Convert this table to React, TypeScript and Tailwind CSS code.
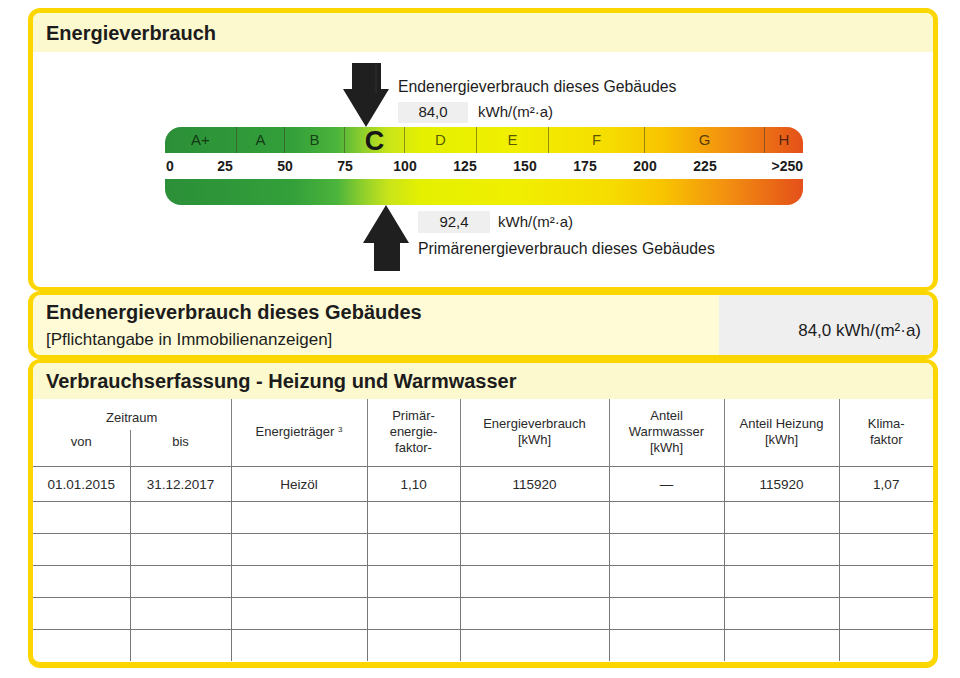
import React from 'react'

const bar =
  'bg-[linear-gradient(90deg,#2b8f38_0%,#33a03a_20%,#4cb43c_27%,#8fcf2c_31%,#c8e41a_35%,#e4f000_40%,#f1ef00_55%,#f6dc00_70%,#f8c400_78%,#f29010_88%,#e4501a_100%)]'

const classes = [
  { label: 'A+', w: 'w-[72px]' },
  { label: 'A', w: 'w-[48px]' },
  { label: 'B', w: 'w-[60px]' },
  { label: 'C', w: 'w-[60px]', big: true },
  { label: 'D', w: 'w-[72px]' },
  { label: 'E', w: 'w-[72px]' },
  { label: 'F', w: 'w-[96px]' },
  { label: 'G', w: 'w-[120px]' },
  { label: 'H', w: 'flex-1' },
]

const ticks = ['25', '50', '75', '100', '125', '150', '175', '200', '225']

const rows = [
  ['01.01.2015', '31.12.2017', 'Heizöl', '1,10', '115920', '—', '115920', '1,07'],
  ['', '', '', '', '', '', '', ''],
  ['', '', '', '', '', '', '', ''],
  ['', '', '', '', '', '', '', ''],
  ['', '', '', '', '', '', '', ''],
  ['', '', '', '', '', '', '', ''],
]

function ArrowDown() {
  return (
    <svg width="46" height="64" viewBox="0 0 46 64" className="self-end shrink-0">
      <path d="M9 0H38V26H46L23 64L0 26H9Z" fill="#1f1f1f" />
      <path d="M33 1V30" stroke="#333" strokeWidth="1" />
    </svg>
  )
}

function ArrowUp() {
  return (
    <svg width="46" height="66" viewBox="0 0 46 66" className="shrink-0">
      <path d="M23 0L46 38H37V66H11V38H0Z" fill="#1f1f1f" />
    </svg>
  )
}

function Scale() {
  return (
    <div className="ml-[132px] w-[638px] flex flex-col">
      <div className="h-[75px] flex pl-[178px]">
        <ArrowDown />
        <div className="ml-[9px] pt-[26px]">
          <div className="text-[15.8px] leading-[18px] whitespace-nowrap">
            Endenergieverbrauch dieses Gebäudes
          </div>
          <div className="mt-[5px] flex items-center text-[15px]">
            <div className="w-[70px] h-[21px] bg-[#efefef] flex items-center justify-center">84,0</div>
            <span className="ml-[10px]">kWh/(m²·a)</span>
          </div>
        </div>
      </div>

      <div className={`h-[26px] flex rounded-t-[16px] ${bar}`}>
        {classes.map((c, i) => (
          <div
            key={c.label}
            className={`${c.w} h-full flex items-center justify-center ${
              i < classes.length - 1 ? 'border-r border-[#3a3a1a]/50' : ''
            } ${c.big ? 'text-[27px] font-bold text-[#161616] leading-none pt-[2px]' : 'text-[15px] text-black/65'}`}
          >
            {c.label}
          </div>
        ))}
      </div>

      <div className="h-[26px] flex items-center text-[14px] font-bold text-[#1a1a1a]">
        <div className="w-[30px] pl-px">0</div>
        {ticks.map((t) => (
          <div key={t} className="w-[60px] text-center">
            {t}
          </div>
        ))}
        <div className="flex-1 text-right">&gt;250</div>
      </div>

      <div className={`h-[26px] rounded-b-[16px] ${bar}`} />

      <div className="flex pl-[198px]">
        <ArrowUp />
        <div className="ml-[9px] pt-[6px]">
          <div className="flex items-center text-[15px]">
            <div className="w-[72px] h-[22px] bg-[#efefef] flex items-center justify-center">92,4</div>
            <span className="ml-[8px]">kWh/(m²·a)</span>
          </div>
          <div className="mt-[6px] text-[15.8px] leading-[18px] whitespace-nowrap">
            Primärenergieverbrauch dieses Gebäudes
          </div>
        </div>
      </div>
    </div>
  )
}

export default function App() {
  const th = 'font-normal text-[13px] leading-[16px] text-center text-[#2a2a2a] border-[#808080]'
  return (
    <div className="w-[960px] h-[678px] overflow-hidden bg-white pt-[8px] pl-[28px] font-['Liberation_Sans',Arial,sans-serif] text-[#1c1c1c]">
      <div className="w-[910px] flex flex-col">
        <section className="h-[283px] rounded-[12px] border-x-[5px] border-t-[5px] border-b-4 border-[#fcd600] bg-white overflow-hidden flex flex-col">
          <div className="h-[39px] bg-[#fdf9cf] flex items-center pl-[13px]">
            <h2 className="text-[20px] font-bold leading-6">Energieverbrauch</h2>
          </div>
          <Scale />
        </section>

        <section className="h-[68px] rounded-[12px] border-x-[5px] border-y-4 border-[#fcd600] bg-[#fefbd6] overflow-hidden flex">
          <div className="flex-1 pl-[13px] pt-[5px]">
            <h2 className="text-[20px] font-bold leading-6">Endenergieverbrauch dieses Gebäudes</h2>
            <p className="mt-[6px] text-[17px] leading-[20px]">[Pflichtangabe in Immobilienanzeigen]</p>
          </div>
          <div className="w-[214px] bg-[#efeff0] flex items-center justify-end pr-[12px] pt-[12px] text-[17px]">
            84,0 kWh/(m²·a)
          </div>
        </section>

        <section className="h-[309px] rounded-[12px] border-x-[5px] border-t-4 border-b-[6px] border-[#fcd600] bg-white overflow-hidden flex flex-col">
          <div className="h-[36px] shrink-0 bg-[#fdf9cf] flex items-center pl-[13px]">
            <h2 className="text-[20px] font-bold leading-6">Verbrauchserfassung - Heizung und Warmwasser</h2>
          </div>
          <table className="w-full table-fixed border-collapse">
            <colgroup>
              <col className="w-[97px]" />
              <col className="w-[101px]" />
              <col className="w-[136px]" />
              <col className="w-[93px]" />
              <col className="w-[149px]" />
              <col className="w-[115px]" />
              <col className="w-[115px]" />
              <col />
            </colgroup>
            <thead>
              <tr className="h-[31px]">
                <th colSpan={2} className={`${th} align-bottom pb-[4px]`}>
                  Zeitraum
                </th>
                <th rowSpan={2} className={`${th} border-l`}>
                  Energieträger <sup className="text-[8px]">3</sup>
                </th>
                <th rowSpan={2} className={`${th} border-l`}>
                  Primär-
                  <br />
                  energie-
                  <br />
                  faktor-
                </th>
                <th rowSpan={2} className={`${th} border-l text-[11.5px]`}>
                  Energieverbrauch
                  <br />
                  [kWh]
                </th>
                <th rowSpan={2} className={`${th} border-l`}>
                  Anteil
                  <br />
                  Warmwasser
                  <br />
                  [kWh]
                </th>
                <th rowSpan={2} className={`${th} border-l`}>
                  Anteil Heizung
                  <br />
                  [kWh]
                </th>
                <th rowSpan={2} className={`${th} border-l`}>
                  Klima-
                  <br />
                  faktor
                </th>
              </tr>
              <tr className="h-[36px]">
                <th className={`${th} align-top pt-[4px]`}>von</th>
                <th className={`${th} align-top pt-[4px] border-l`}>bis</th>
              </tr>
            </thead>
            <tbody>
              {rows.map((r, ri) => (
                <tr key={ri} className={ri === 0 ? 'h-[35px]' : 'h-[32px]'}>
                  {r.map((v, ci) => (
                    <td
                      key={ci}
                      className={`border-t border-[#777] text-center text-[13.5px] text-[#2a2a2a] ${ri === 0 ? 'pt-[4px]' : ''} ${ci > 0 ? 'border-l' : ''}`}
                    >
                      {v}
                    </td>
                  ))}
                </tr>
              ))}
            </tbody>
          </table>
        </section>
      </div>
    </div>
  )
}
